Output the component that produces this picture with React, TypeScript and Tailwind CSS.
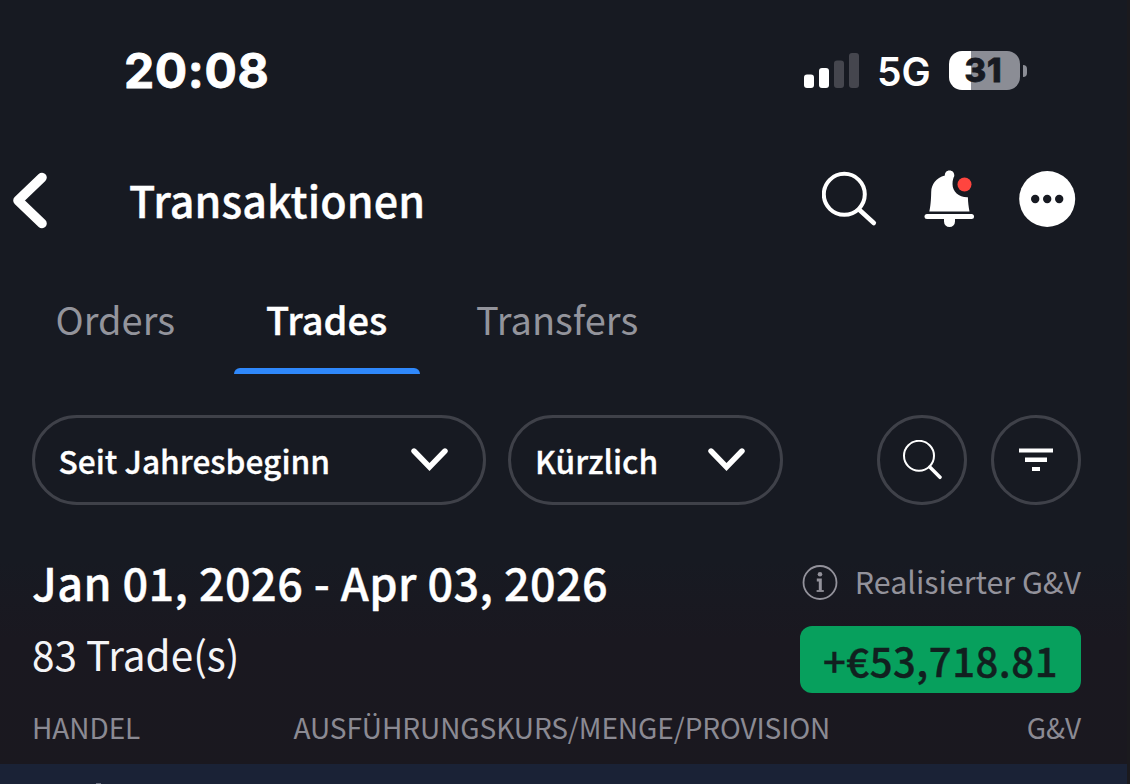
interface Tab {
  label: string;
  active?: boolean;
  className: string;
}

const tabs: Tab[] = [
  { label: 'Orders', className: 'w-[166px] pl-[23.5px] text-[#93949c]' },
  { label: 'Trades', active: true, className: 'w-[186px] ml-9 text-white font-medium' },
  { label: 'Transfers', className: 'ml-14 text-[#93949c]' },
];

function StatusBar() {
  return (
    <div className="flex items-center h-[142px] pl-[124px] pr-[100px] font-['Inter'] text-white">
      <span className="text-[48px] font-bold leading-[60px] tracking-[0.6px] [-webkit-text-stroke:0.8px_white]">
        20:08
      </span>
      <svg className="ml-auto" width="56" height="36" viewBox="0 0 56 36" aria-hidden="true">
        <rect x="0" y="21.500" width="10" height="13.500" rx="3" fill="#fff" />
        <rect x="15" y="15" width="10" height="20" rx="3" fill="#fff" />
        <rect x="30" y="7.500" width="10" height="27.500" rx="3" fill="#45464e" />
        <rect x="45" y="0" width="10" height="35" rx="3" fill="#45464e" />
      </svg>
      <span className="mt-px ml-[17px] w-[54px] text-[39px] font-semibold leading-[60px] whitespace-nowrap">5G</span>
      <div className="ml-[18px] -mt-px flex items-center">
        <div className="w-[71px] h-[39px] rounded-[13px] bg-[linear-gradient(90deg,#fff_22px,#8b8d95_22px)] flex items-center justify-center">
          <span className="-ml-[2px] text-[33px] font-extrabold leading-[39px] tracking-[1px] text-[#171a22] [-webkit-text-stroke:0.8px_#171a22]">
            31
          </span>
        </div>
        <div className="ml-[3px] w-1 h-3 rounded-r-full bg-[#8b8d95]" />
      </div>
    </div>
  );
}

function Header() {
  return (
    <div className="flex items-center h-[58px] mt-7 pl-3 pr-[51px] text-white">
      <svg width="36" height="60" viewBox="0 0 36 60" fill="none" aria-hidden="true">
        <path d="M30 8.500 L6 31.500 L30 54.500" stroke="#fff" strokeWidth="9.600" strokeLinecap="round" strokeLinejoin="round" />
      </svg>
      <h1 className="ml-[81px] text-[43px] font-medium leading-[58px] tracking-[0.1px] [-webkit-text-stroke:0.4px_white]">
        Transaktionen
      </h1>
      <svg className="ml-auto" width="56" height="56" viewBox="0 0 56 56" fill="none" stroke="#fff" aria-hidden="true">
        <circle cx="22.300" cy="23.300" r="20.500" strokeWidth="4" />
        <path d="M37 38.500 L51.800 52" strokeWidth="4.600" strokeLinecap="round" />
      </svg>
      <svg className="ml-[46px]" width="52" height="58" viewBox="0 0 52 58" aria-hidden="true">
        <path
          d="M25.500 0.500 C22.500 0.500 20.700 2.700 20.900 5.500 C12 8 7.500 14 7.200 22 C7 31 6.500 36 5.300 41.500 H45.500 C44.600 37 44 32 43.900 27.200 C35 27.500 28.500 22 28.500 14 C28.500 10.500 29.300 8 30.300 6 C30.500 2.700 28.500 0.500 25.500 0.500 Z"
          fill="#fff"
        />
        <rect x="0.500" y="44" width="49.500" height="5" rx="2.500" fill="#fff" />
        <path d="M20 48.500 H31 V51.500 A5.500 5.500 0 0 1 20 51.500 Z" fill="#fff" />
        <circle cx="40.500" cy="14.500" r="7" fill="#ff453f" />
      </svg>
      <svg className="ml-[43px]" width="57" height="57" viewBox="0 0 57 57" aria-hidden="true">
        <circle cx="28.200" cy="28" r="28" fill="#fff" />
        <circle cx="16.200" cy="28" r="4.200" fill="#171a22" />
        <circle cx="28.200" cy="28" r="4.200" fill="#171a22" />
        <circle cx="40.200" cy="28" r="4.200" fill="#171a22" />
      </svg>
    </div>
  );
}

function Tabs() {
  return (
    <div className="flex h-[86px] mt-[60px] pl-8 text-[38px] leading-[61px]">
      {tabs.map((tab) => (
        <div key={tab.label} className={`flex flex-col justify-between ${tab.className}`}>
          <span className={tab.active ? 'pl-8 [-webkit-text-stroke:0.4px_white]' : ''}>{tab.label}</span>
          {tab.active && <div className="h-1.5 rounded-t-[6px] bg-[#2f88fb]" />}
        </div>
      ))}
    </div>
  );
}

function Chevron() {
  return (
    <svg width="38" height="24" viewBox="0 0 38 24" fill="none" aria-hidden="true">
      <path d="M3 3 L18.500 19 L34 3" stroke="#fff" strokeWidth="5.400" strokeLinecap="round" />
    </svg>
  );
}

function Filters() {
  return (
    <div className="flex mt-[41px] pl-8 pr-[46px] text-[31.7px] font-medium text-white">
      <button className="flex items-center justify-between w-[454px] h-[90px] pl-[23.5px] pr-[34px] border-3 border-[#3f4149] rounded-full [-webkit-text-stroke:0.3px_white]">
        <span className="mt-[2px]">Seit Jahresbeginn</span>
        <Chevron />
      </button>
      <button className="flex items-center justify-between w-[275px] h-[90px] ml-[22px] pl-6 pr-[34px] border-3 border-[#3f4149] rounded-full [-webkit-text-stroke:0.3px_white]">
        <span className="mt-[2px]">Kürzlich</span>
        <Chevron />
      </button>
      <button aria-label="Suchen" className="flex items-center justify-center size-[90px] ml-auto border-3 border-[#3f4149] rounded-full">
        <svg width="40" height="40" viewBox="0 0 40 40" fill="none" stroke="#fff" aria-hidden="true">
          <circle cx="17" cy="15.800" r="15" strokeWidth="2" />
          <path d="M27.800 27 L38 37.300" strokeWidth="3.500" strokeLinecap="round" />
        </svg>
      </button>
      <button aria-label="Filter" className="flex items-center justify-center size-[90px] ml-[24px] border-3 border-[#3f4149] rounded-full">
        <svg width="34" height="24" viewBox="0 0 34 24" fill="#fff" aria-hidden="true">
          <rect x="0" y="0.500" width="34" height="4" />
          <rect x="6" y="9.500" width="22" height="4.500" />
          <rect x="13" y="19" width="8" height="4" />
        </svg>
      </button>
    </div>
  );
}

function Summary() {
  return (
    <div className="flex justify-between mt-[50px] h-[150px] pl-8 pr-[46px]">
      <div>
        <h2 className="text-[45px] font-medium leading-[54px] tracking-[0.42px] text-white [-webkit-text-stroke:0.4px_white]">
          Jan 01, 2026 - Apr 03, 2026
        </h2>
        <p className="mt-4 text-[40.5px] leading-[58px] text-[#f4f4f7]">83 Trade(s)</p>
      </div>
      <div className="flex flex-col items-end">
        <div className="flex items-center mt-[2px] h-12 text-[30.4px] leading-[42px] text-[#93929b]">
          <svg className="mt-1 mr-[17px]" width="36" height="36" viewBox="0 0 36 36" fill="none" aria-hidden="true">
            <circle cx="18" cy="17.500" r="16.500" stroke="#93929b" strokeWidth="1.800" />
            <circle cx="18" cy="9.200" r="2.300" fill="#93929b" />
            <path d="M14.800 15 H18.300 V25.500" stroke="#93929b" strokeWidth="3" />
            <path d="M14.600 26 H21.800" stroke="#93929b" strokeWidth="1.800" />
          </svg>
          Realisierter G&amp;V
        </div>
        <div className="flex items-center justify-center mt-[21px] w-[281px] h-[67px] rounded-xl bg-[#07a05d]">
          <span className="text-[40px] font-medium leading-[60px] tracking-[0.55px] text-[#11201f] [-webkit-text-stroke:0.4px_#11201f]">
            +€53,718.81
          </span>
        </div>
      </div>
    </div>
  );
}

function TableHead() {
  return (
    <div className="flex h-[59px] pl-8 pr-[46px] text-[28px] leading-[45px] tracking-[-0.06px] text-[#8b8a93]">
      <span className="w-[261.500px]">HANDEL</span>
      <span>AUSFÜHRUNGSKURS/MENGE/PROVISION</span>
      <span className="ml-auto">G&amp;V</span>
    </div>
  );
}

export default function App() {
  return (
    <div className="w-[1130px] h-[784px] overflow-hidden border-r-3 border-[#1b1a1e] bg-[linear-gradient(180deg,#171a22_0,#171a22_560px,#1a1820_640px,#1a181f_784px)] font-['Noto_Sans_CJK_SC',sans-serif]">
      <StatusBar />
      <Header />
      <Tabs />
      <Filters />
      <Summary />
      <TableHead />
      {/* First trade row, cut off by the viewport */}
      <div className="flex items-end h-5 pl-24 bg-[#1a2236]">
        <div className="w-[5px] h-px bg-[#6b7080]" />
      </div>
    </div>
  );
}
